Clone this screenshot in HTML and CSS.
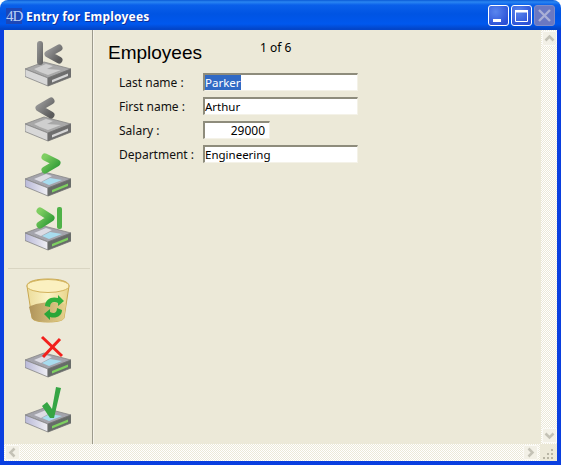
FILE: index.html
```html
<!DOCTYPE html>
<html lang="en">

<head>
    <meta charset="UTF-8">
    <title>Entry for Employees</title>
    <link rel="stylesheet" href="styles.css">
</head>

<body>
    <div class="window">
        <!-- Title bar -->
        <div class="titlebar">
            <span class="app-logo">4D</span>
            <span class="title">Entry for Employees</span>
            <div class="win-buttons">
                <span class="win-btn"><svg width="21" height="21"><rect x="5" y="14" width="8" height="3" fill="#fff"/></svg></span>
                <span class="win-btn"><svg width="21" height="21"><path d="M4.500 5.500h12v11h-12z" fill="none" stroke="#fff"/><rect x="4" y="5" width="13" height="2.500" fill="#fff"/></svg></span>
                <span class="win-btn off"><svg width="21" height="21"><path d="M5 5l11 11M16 5L5 16" stroke="#a9afd6" stroke-width="2.400"/></svg></span>
            </div>
        </div>

        <div class="frame">
            <div class="main">
                <!-- Tool column -->
                <div class="tools">
                    <svg class="tool" viewBox="0 0 46 48">
                        <defs>
                            <linearGradient id="greyMark" x1="0" y1="0" x2="1" y2="1">
                                <stop offset="0" stop-color="#9a9a9a"/>
                                <stop offset="1" stop-color="#5c5c5c"/>
                            </linearGradient>
                            <linearGradient id="greenMark" x1="0" y1="0" x2="1" y2="1">
                                <stop offset="0" stop-color="#7fce62"/>
                                <stop offset="1" stop-color="#2d9a35"/>
                            </linearGradient>
                            <linearGradient id="sideFace" x1="0" y1="0" x2="1" y2="0">
                                <stop offset="0" stop-color="#b9b9d8"/>
                                <stop offset="1" stop-color="#f0f0f4"/>
                            </linearGradient>
                            <linearGradient id="binBody" x1="0" y1="0" x2="1" y2="0">
                                <stop offset="0" stop-color="#ecdc9a"/>
                                <stop offset="0.5" stop-color="#fbf3c6"/>
                                <stop offset="1" stop-color="#e8d48a"/>
                            </linearGradient>
                            <linearGradient id="binFill" x1="0" y1="0" x2="1" y2="0">
                                <stop offset="0" stop-color="#b0945a"/>
                                <stop offset="1" stop-color="#e6d28c"/>
                            </linearGradient>
                            <g id="driveGrey">
                                <path d="M0 7L19 0L46 7L23 16Z" fill="#a8a8a8" stroke="#858585" stroke-width="0.800"/>
                                <path d="M9 7L21 2L28 4L22 7L36 8L23 13L15 10Z" fill="#cfcfcf"/>
                                <path d="M0 7L23 16V24L0 14.500Z" fill="#d8d8d8" stroke="#858585" stroke-width="0.800"/>
                                <path d="M23 16L46 7V15L23 24Z" fill="#6e6e6e" stroke="#707070" stroke-width="0.800"/>
                                <path d="M27 18L43 11.500V14L27 20.500Z" fill="#d6d6d6"/>
                            </g>
                            <g id="driveColor">
                                <path d="M0 7L19 0L46 7L23 16Z" fill="#a4a4ac" stroke="#858585" stroke-width="0.800"/>
                                <path d="M9 7L21 2L27 4L16 10Z" fill="#dcdce4"/>
                                <path d="M25 6L37 8L24 13L17 10Z" fill="#a8dcee"/>
                                <path d="M0 7L23 16V24L0 14.500Z" fill="url(#sideFace)" stroke="#858585" stroke-width="0.800"/>
                                <path d="M23 16L46 7V15L23 24Z" fill="#666c68" stroke="#707070" stroke-width="0.800"/>
                                <path d="M27 18L43 11.500V14L27 20.500Z" fill="#7ed060"/>
                            </g>
                        </defs>
                        <use href="#driveGrey" y="23"/>
                        <rect x="12" y="2" width="6" height="24" rx="3" fill="url(#greyMark)"/>
                        <path d="M34 9L23 15L34 21" stroke="url(#greyMark)" stroke-width="7" stroke-linecap="round" stroke-linejoin="round" fill="none"/>
                    </svg>
                    <svg class="tool" viewBox="0 0 46 48">
                        <use href="#driveGrey" y="23"/>
                        <path d="M26 7L14 14L26 21" stroke="url(#greyMark)" stroke-width="7" stroke-linecap="round" stroke-linejoin="round" fill="none"/>
                    </svg>
                    <svg class="tool" viewBox="0 0 46 48">
                        <use href="#driveColor" y="23"/>
                        <path d="M20 8L32 14L20 21" stroke="url(#greenMark)" stroke-width="7" stroke-linecap="round" stroke-linejoin="round" fill="none"/>
                    </svg>
                    <svg class="tool" viewBox="0 0 46 48">
                        <use href="#driveColor" y="22"/>
                        <path d="M15 7L26 14L15 21" stroke="url(#greenMark)" stroke-width="7" stroke-linecap="round" stroke-linejoin="round" fill="none"/>
                        <rect x="32" y="3" width="5" height="22" rx="2" fill="#4fb248"/>
                    </svg>

                    <div class="divider"></div>

                    <svg class="tool bin" viewBox="0 0 46 46">
                        <path d="M2 9C2 4 12 2 23 2S44 4 44 9L39 41C38 44 30 45 23 45S8 44 7 41Z" fill="url(#binBody)" stroke="#c9a850"/>
                        <path d="M4 30C12 25 30 24 41 27L39 41C38 44 30 45 23 45S8 44 7 41Z" fill="url(#binFill)"/>
                        <ellipse cx="23" cy="9" rx="21" ry="6.500" fill="#fbf0c0" stroke="#d2b25c"/>
                        <path d="M20 29C20 22 27 19 33 21V18L39 24L33 29V26C29 24 25 25 25 30Z" fill="#31b03d"/>
                        <path d="M37 33C37 39 31 42 25 40V43L19 37L25 32V35C29 37 32 36 32 31Z" fill="#2ba638"/>
                    </svg>
                    <svg class="tool" viewBox="0 0 46 48">
                        <use href="#driveColor" y="23"/>
                        <path d="M17 7L37 26M35 9L18 27" stroke="#f2201c" stroke-width="3"/>
                    </svg>
                    <svg class="tool" viewBox="0 0 46 48">
                        <use href="#driveColor" y="23"/>
                        <path d="M17 21L22 17L27 24L31 2L36 3L29 33H25Z" fill="#35a544"/>
                    </svg>
                </div>

                <!-- Form -->
                <div class="content">
                    <div class="heading">
                        <h1>Employees</h1>
                        <span class="counter">1 of 6</span>
                    </div>
                    <div class="form">
                        <label>Last name :</label>
                        <div class="field"><span class="selected">Parker</span></div>
                        <label>First name :</label>
                        <div class="field">Arthur</div>
                        <label>Salary :</label>
                        <div class="field short">29000</div>
                        <label>Department :</label>
                        <div class="field">Engineering</div>
                    </div>
                </div>

                <!-- Vertical scrollbar -->
                <div class="vbar">
                    <span class="sb-btn"><svg width="15" height="15"><path d="M3.500 9.500L7.500 5.500L11.500 9.500" fill="none" stroke="#c4c2b6" stroke-width="2.500"/></svg></span>
                    <span class="sb-btn"><svg width="15" height="15"><path d="M3.500 5.500L7.500 9.500L11.500 5.500" fill="none" stroke="#c4c2b6" stroke-width="2.500"/></svg></span>
                </div>
            </div>

            <!-- Horizontal scrollbar -->
            <div class="hbar">
                <span class="sb-btn"><svg width="15" height="15"><path d="M9.500 3.500L5.500 7.500L9.500 11.500" fill="none" stroke="#c4c2b6" stroke-width="2.500"/></svg></span>
                <span class="sb-btn"><svg width="15" height="15"><path d="M5.500 3.500L9.500 7.500L5.500 11.500" fill="none" stroke="#c4c2b6" stroke-width="2.500"/></svg></span>
                <span class="grip"><svg width="17" height="17"><path d="M11 5h2v2h-2zM7 9h2v2H7zM11 9h2v2h-2zM3 13h2v2H3zM7 13h2v2H7zM11 13h2v2h-2z" fill="#b8b5a4"/></svg></span>
            </div>
        </div>
    </div>
</body>

</html>
```
FILE: styles.css
```css
* {
    box-sizing: border-box;
}

body {
    margin: 0;
    background: #fff;
    font-family: "Noto Sans", "Open Sans", sans-serif;
}

.window {
    display: flex;
    flex-direction: column;
    width: 561px;
    height: 465px;
}

.titlebar {
    display: flex;
    align-items: center;
    height: 30px;
    padding: 2px 6px 0;
    border-radius: 8px 8px 0 0;
    background: linear-gradient(#0a5ad6 0, #2a86f2 2px, #0a60ea 5px, #0054e3 14px, #0058ee 24px, #0345c8 29px);
}

.app-logo {
    width: 16px;
    height: 16px;
    background: #1c47b8;
    color: #b9cdf5;
    font: 15px/16px "Liberation Serif", serif;
    letter-spacing: -1px;
    text-align: center;
}

.title {
    margin-left: 4px;
    color: #fff;
    font: bold 12px "Noto Sans", sans-serif;
    letter-spacing: 0.2px;
    text-shadow: 1px 1px 0 #0f2f9c;
}

.win-buttons {
    display: flex;
    gap: 2px;
    margin-left: auto;
    margin-top: -1px;
}

.win-btn {
    display: block;
    width: 21px;
    height: 21px;
    border: 1px solid #fff;
    border-radius: 3px;
    background: radial-gradient(circle at 35% 30%, #5a86ee, #2a50d6 80%);
    overflow: hidden;
}

.win-btn svg {
    display: block;
    margin: -1px;
}

.win-btn.off {
    border-color: #7e8cc8;
    background: #6a78c2;
}

.frame {
    display: flex;
    flex: 1;
    flex-direction: column;
    min-height: 0;
    border: 4px solid #0a3fe0;
    border-top: 0;
    background: #ece9d8;
}

.main {
    display: flex;
    flex: 1;
    min-height: 0;
}

.tools {
    display: flex;
    flex-direction: column;
    align-items: center;
    gap: 7px;
    width: 89px;
    padding: 9px 0 0;
    border-right: 1px solid #9c9a8c;
    box-shadow: 1px 0 0 #f6f4ea;
}

.tool {
    display: block;
    flex: none;
    width: 46px;
    height: 48px;
}

.tool.bin {
    height: 46px;
}

.divider {
    flex: none;
    align-self: stretch;
    height: 1px;
    margin: 9px 2px 1px 4px;
    background: #d9d5c2;
}

.content {
    flex: 1;
    padding: 0 0 0 15px;
}

.heading {
    display: flex;
    height: 43px;
}

h1 {
    margin: 12px 0 0;
    font: normal 19px/22px "Liberation Sans", sans-serif;
    color: #000;
}

.counter {
    margin: 10px 0 0 58px;
    font-size: 12px;
    line-height: 16px;
}

.form {
    display: grid;
    grid-template-columns: 84px max-content;
    grid-auto-rows: 18px;
    row-gap: 6px;
    justify-items: start;
    padding-left: 11px;
}

label {
    padding-top: 1px;
    font-size: 12px;
    line-height: 18px;
    color: #111;
}

.field {
    width: 155px;
    height: 18px;
    border-top: 2px solid #8e8c7c;
    border-left: 2px solid #8e8c7c;
    border-right: 1px solid #f4f2e8;
    border-bottom: 1px solid #f4f2e8;
    background: #fff;
    font-size: 11.5px;
    line-height: 15px;
    color: #000;
    white-space: nowrap;
}

.field.short {
    width: 67px;
    padding-right: 4px;
    font-size: 12px;
    text-align: right;
}

.selected {
    background: #316ac5;
    color: #fff;
}

/* checker pattern of the disabled scrollbars */
.vbar,
.hbar {
    display: flex;
    flex: none;
    justify-content: space-between;
    background-color: #ece9d8;
    background-image: conic-gradient(#fff 25%, transparent 0 50%, #fff 0 75%, transparent 0);
    background-size: 2px 2px;
}

.vbar {
    flex-direction: column;
    align-items: center;
    width: 16px;
    padding: 1px 0;
}

.hbar {
    align-items: center;
    height: 17px;
    padding-left: 1px;
}

.sb-btn {
    display: block;
    flex: none;
    width: 15px;
    height: 15px;
    border-radius: 2px;
    background: #f2f0e6;
    box-shadow: inset 0 0 0 1px #fbfaf5;
}

.sb-btn svg,
.grip svg {
    display: block;
}

.hbar .sb-btn:nth-child(2) {
    margin-left: auto;
    margin-right: 2px;
}

.grip {
    flex: none;
    width: 17px;
    height: 17px;
    background: #ece9d8;
}
```
